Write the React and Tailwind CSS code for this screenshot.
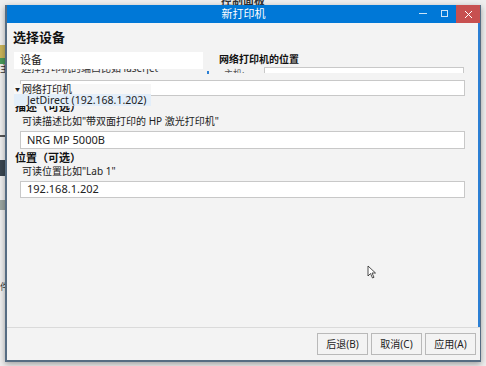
const font = { fontFamily: '"Noto Sans", "Noto Sans CJK SC", sans-serif' };

const Input = ({ value = "", className = "" }) => (
  <div className={`ml-[7px] w-[445px] bg-white border border-[#c8c8c8] flex items-center px-[6px] text-[11px] text-[#222] ${className}`}>
    {value}
  </div>
);

const Button = ({ children }) => (
  <div className="w-[51px] h-[22px] border border-[#b9b9b9] bg-[#f3f3f3] flex items-center justify-center text-[10px] text-[#222]">
    {children}
  </div>
);

export default function App() {
  return (
    <div className="relative w-[486px] h-[366px] overflow-hidden bg-[#eeeeee]" style={font}>
      {/* desktop behind */}
      <div className="absolute top-[-7px] left-0 w-full text-center text-[11px] font-bold text-[#333]">控制面板</div>
      <div className="absolute left-0 top-[45px] w-[5px] h-[14px] bg-[#c9b45a]" />
      <div className="absolute left-0 top-[58px] w-[5px] h-[6px] bg-[#4a9a5a]" />
      <div className="absolute left-0 top-[64px] text-[9px] text-[#333] leading-none">主</div>
      <div className="absolute left-0 top-[135px] w-[5px] h-[2px] bg-[#555]" />
      <div className="absolute left-0 top-[160px] w-[5px] h-[16px] bg-[#3a4650]" />
      <div className="absolute left-0 top-[200px] w-[5px] h-[10px] bg-[#9aa5a0]" />
      <div className="absolute left-0 top-[282px] text-[9px] text-[#333] leading-none">件</div>

      {/* window */}
      <div className="absolute left-[5px] top-[5px] w-[476px] h-[357px] flex flex-col bg-[#f3f3f3] border-l-2 border-b-2 border-r border-[#566c82] shadow-[0_2px_6px_rgba(0,0,0,0.35)]">
        <div className="h-[18px] bg-[#0078d7] flex items-center relative shrink-0">
          <div className="flex-1 text-center text-white text-[11px]">新打印机</div>
          <div className="absolute right-[53px] top-[8px] w-[8px] h-px bg-white/80" />
          <div className="absolute right-[32px] top-[5px] w-[7px] h-[7px] border border-white/80" />
          <div className="absolute right-0 top-0 w-[24px] h-[18px] bg-[#c75050] flex items-center justify-center">
            <svg width="9" height="9" viewBox="0 0 9 9" stroke="white" strokeWidth="1">
              <path d="M1 1L8 8M8 1L1 8" />
            </svg>
          </div>
        </div>

        <div className="relative flex-1 flex flex-col px-[6px] border-r-2 border-[#2b7fd4]">
          <div className="pt-[6px] h-[23px] text-[13px] font-bold text-[#111] leading-[16px]">选择设备</div>

          <div className="flex mt-[6px] h-[22px]">
            <div className="flex flex-col">
              <div className="ml-[1px] w-[189px] h-[17px] bg-white flex items-center px-[6px] text-[11px] text-[#222]">设备</div>
              <div className="h-[5px] overflow-hidden flex items-end pl-[8px] text-[10px] leading-[12px] text-[#333] whitespace-nowrap">
                选择打印机的端口比如 laserjet
              </div>
            </div>
            <div className="w-[2px] h-[3px] bg-[#2b7fd4] mt-[19px] ml-[4px]" />
            <div className="flex flex-col ml-[10px]">
              <div className="h-[15px] text-[10px] font-bold text-[#111] leading-[14px]">网络打印机的位置</div>
              <div className="flex h-[6px] overflow-hidden">
                <span className="ml-[5px] w-[40px] text-[9px] text-[#555] leading-[14px]">主机:</span>
                <div className="w-[200px] h-[10px] bg-white border border-[#c8c8c8]" />
              </div>
            </div>
          </div>

          <Input className="mt-[6px] h-[16px]" />

          <div className="mt-[5px] h-[12px] text-[11px] font-bold text-[#111] leading-[12px] pl-[2px]">描述（可选）</div>
          <div className="mt-[2px] h-[13px] text-[10px] text-[#222] leading-[13px] pl-[9px]">可读描述比如"带双面打印的 HP 激光打印机"</div>
          <Input className="mt-[3px] h-[18px]" value="NRG MP 5000B" />

          <div className="mt-[2px] h-[13px] text-[11px] font-bold text-[#111] leading-[13px] pl-[2px]">位置（可选）</div>
          <div className="mt-[1px] h-[13px] text-[10px] text-[#222] leading-[13px] pl-[9px]">可读位置比如"Lab 1"</div>
          <Input className="mt-[3px] h-[17px]" value="192.168.1.202" />

          <div className="flex-1" />

          {/* tree popup over the form */}
          <div className="absolute left-[7px] top-[61px] w-[137px] flex flex-col text-[10px] text-[#222] whitespace-nowrap">
            <div className="h-[10px] bg-[#f7f7f7] flex items-center leading-none">
              <span className="text-[5px] mr-[2px] ml-[1px]">▼</span>网络打印机
            </div>
            <div className="h-[12px] bg-[#e3eef9] flex items-center pl-[13px] text-[10.5px] leading-none">JetDirect (192.168.1.202)</div>
          </div>

          {/* cursor */}
          <svg className="absolute left-[360px] top-[242px]" width="10" height="14" viewBox="0 0 10 14">
            <path d="M1 1V11L3.5 8.5L5.5 13L7 12.3L5 8H8.5Z" fill="white" stroke="#222" strokeWidth="0.8" />
          </svg>
        </div>

        <div className="h-[33px] border-t border-[#dadada] flex items-center justify-end gap-[3px] pr-[4px] shrink-0">
          <Button>后退(B)</Button>
          <Button>取消(C)</Button>
          <Button>应用(A)</Button>
        </div>
      </div>
    </div>
  );
}
